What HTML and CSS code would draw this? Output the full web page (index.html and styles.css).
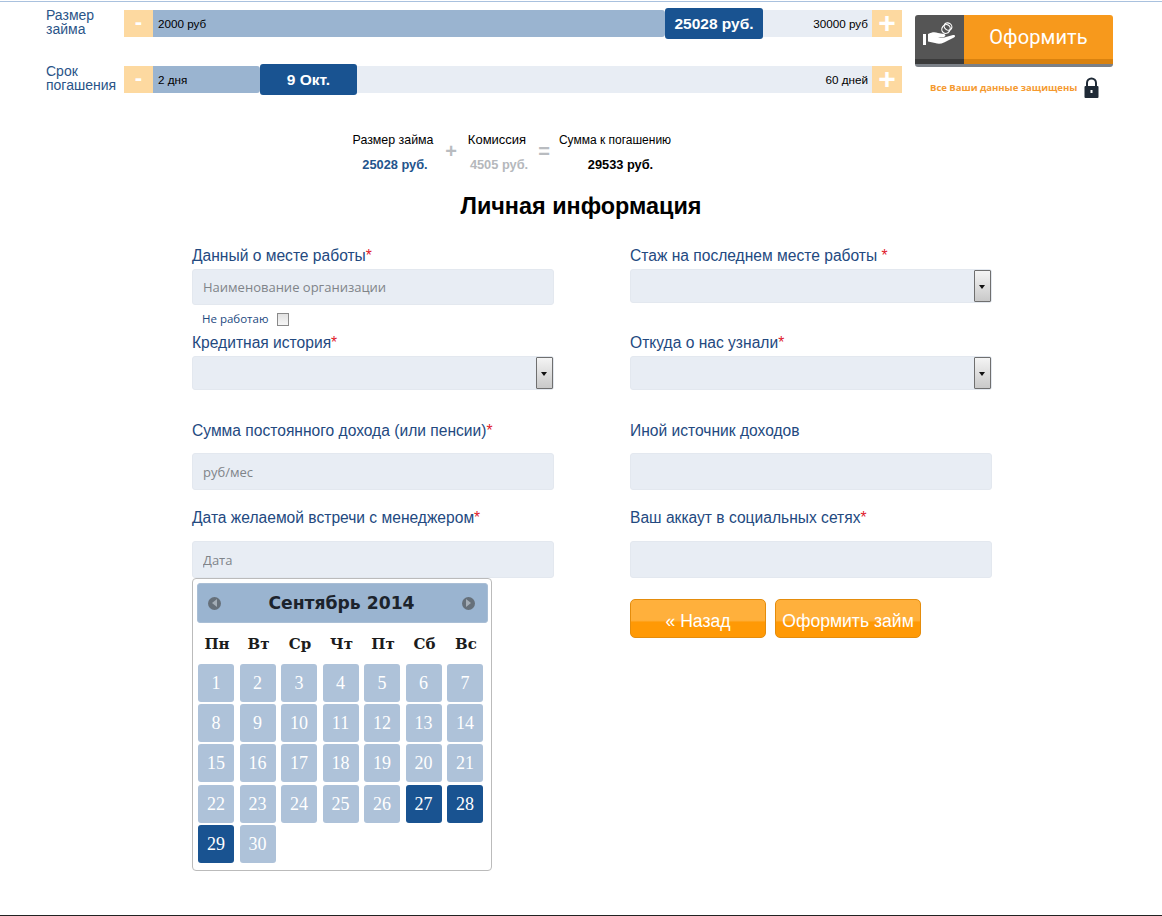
FILE: index.html
```html
<!DOCTYPE html>
<html lang="ru">
<head>
    <meta charset="UTF-8">
    <title>Личная информация</title>
    <link rel="stylesheet" href="styles.css">
</head>
<body>
<div class="page">
    <!-- Calculator -->
    <div class="calc">
        <div class="sliders">
            <div class="slider">
                <div class="slider-label">Размер займа</div>
                <div class="step">-</div>
                <div class="track">
                    <div class="fill fill-sum"><span>2000 руб</span></div>
                    <div class="handle handle-sum">25028 руб.</div>
                    <div class="rest"><span>30000 руб</span></div>
                </div>
                <div class="step step-plus">+</div>
            </div>
            <div class="slider">
                <div class="slider-label">Срок погашения</div>
                <div class="step">-</div>
                <div class="track">
                    <div class="fill fill-term"><span>2 дня</span></div>
                    <div class="handle handle-term">9 Окт.</div>
                    <div class="rest"><span>60 дней</span></div>
                </div>
                <div class="step step-plus">+</div>
            </div>
        </div>
        <div class="order">
            <a class="order-btn" href="#">
                <span class="order-icon">
                    <svg width="36" height="26" viewBox="0 0 36 26">
                        <rect x="1" y="12" width="3" height="11" fill="#fff"/>
                        <path d="M6 12c4-2 7-2 10-1l6 1c2 .4 2 3-1 3h-5c3 .8 6 .8 8 0l7-2c2-.5 3 1 1 2.500l-10 5c-3 1.500-6 1.500-9 .5l-7-1.500z" fill="#fff"/>
                        <ellipse cx="24" cy="7" rx="4" ry="4.500" fill="none" stroke="#fff" stroke-width="1.200" transform="rotate(35 24 7)"/>
                        <ellipse cx="26" cy="4.500" rx="4" ry="3.500" fill="none" stroke="#fff" stroke-width="1.200" transform="rotate(35 26 4.500)"/>
                    </svg>
                </span>
                <span class="order-text">Оформить</span>
            </a>
            <div class="secure">
                <span>Все Ваши данные защищены</span>
                <svg width="15" height="21" viewBox="0 0 15 21">
                    <path d="M3 9V6a4.500 4.500 0 0 1 9 0v3" fill="none" stroke="#1f2a36" stroke-width="2"/>
                    <rect x="0.500" y="9" width="14" height="12" rx="1" fill="#1f2a36"/>
                    <rect x="6.500" y="13" width="2" height="3" fill="#fff"/>
                </svg>
            </div>
        </div>
    </div>

    <!-- Summary -->
    <div class="summary">
        <div class="sum-col sum-loan">
            <div class="sum-title">Размер займа</div>
            <div class="sum-value blue">25028 руб.</div>
        </div>
        <div class="sum-sign sign-plus">+</div>
        <div class="sum-col sum-fee">
            <div class="sum-title">Комиссия</div>
            <div class="sum-value grey">4505 руб.</div>
        </div>
        <div class="sum-sign sign-eq">=</div>
        <div class="sum-col sum-total">
            <div class="sum-title">Сумма к погашению</div>
            <div class="sum-value">29533 руб.</div>
        </div>
    </div>

    <h1>Личная информация</h1>

    <!-- Form -->
    <form class="form">
        <div class="field field-first">
            <label>Данный о месте работы<i>*</i></label>
            <input class="input" type="text" placeholder="Наименование организации">
            <div class="no-work">
                <span>Не работаю</span>
                <input type="checkbox">
            </div>
        </div>
        <div class="field field-first">
            <label>Стаж на последнем месте работы <i>*</i></label>
            <div class="select"><select></select><span class="arrow"></span></div>
        </div>
        <div class="field field-mid">
            <label>Кредитная история<i>*</i></label>
            <div class="select"><select></select><span class="arrow"></span></div>
        </div>
        <div class="field field-mid">
            <label>Откуда о нас узнали<i>*</i></label>
            <div class="select"><select></select><span class="arrow"></span></div>
        </div>
        <div class="field field-low field-income">
            <label>Сумма постоянного дохода (или пенсии)<i>*</i></label>
            <input class="input" type="text" placeholder="руб/мес">
        </div>
        <div class="field field-low field-income">
            <label>Иной источник доходов</label>
            <input class="input" type="text">
        </div>
        <div class="field field-low">
            <label>Дата желаемой встречи с менеджером<i>*</i></label>
            <input class="input" type="text" placeholder="Дата">

            <div class="calendar">
                <div class="cal-head">
                    <span class="cal-nav"><span class="tri-left"></span></span>
                    <span class="cal-title">Сентябрь 2014</span>
                    <span class="cal-nav"><span class="tri-right"></span></span>
                </div>
                <div class="cal-grid">
                    <b>Пн</b><b>Вт</b><b>Ср</b><b>Чт</b><b>Пт</b><b>Сб</b><b>Вс</b>
                    <span>1</span><span>2</span><span>3</span><span>4</span><span>5</span><span>6</span><span>7</span>
                    <span>8</span><span>9</span><span>10</span><span>11</span><span>12</span><span>13</span><span>14</span>
                    <span>15</span><span>16</span><span>17</span><span>18</span><span>19</span><span>20</span><span>21</span>
                    <span>22</span><span>23</span><span>24</span><span>25</span><span>26</span><span class="on">27</span><span class="on">28</span>
                    <span class="on">29</span><span>30</span>
                </div>
            </div>
        </div>
        <div class="field field-low">
            <label>Ваш аккаут в социальных сетях<i>*</i></label>
            <input class="input" type="text">
            <div class="buttons">
                <a class="btn btn-back" href="#">« Назад</a>
                <a class="btn btn-send" href="#">Оформить займ</a>
            </div>
        </div>
    </form>
</div>
</body>
</html>
```

FILE: styles.css
```css
* {
    margin: 0;
    padding: 0;
    box-sizing: border-box;
}

body {
    padding-top: 1px;
    font-family: "Liberation Sans", Arial, sans-serif;
    background: #fff;
    color: #000;
}

.page {
    min-height: calc(100vh - 1px);
    border-top: 1px solid #a9c1de;
    border-bottom: 1px solid #222;
}

/* Calculator */
.calc {
    display: flex;
    padding: 8px 0 0 46px;
}

.sliders {
    width: 856px;
}

.slider {
    display: flex;
    height: 27px;
    margin-bottom: 29px;
}

.slider-label {
    width: 78px;
    margin-top: -2px;
    font-size: 14px;
    line-height: 14px;
    color: #2a5488;
}

.step {
    width: 29px;
    background: #fdd9a0;
    color: #fff;
    font-size: 22px;
    font-weight: bold;
    line-height: 23px;
    text-align: center;
}

.step-plus {
    width: 30px;
    font-size: 30px;
    line-height: 26px;
}

.track {
    display: flex;
    flex: 1;
    font-size: 11.7px;
    line-height: 27px;
}

.fill {
    background: #9ab4d0;
    padding-left: 5px;
    border-radius: 0 3px 3px 0;
}

.fill-sum {
    width: 512px;
}

.fill-term {
    width: 107px;
}

.handle {
    width: 98px;
    height: 31px;
    margin-top: -2px;
    background: #195391;
    border-radius: 3px;
    color: #fff;
    font-size: 15.5px;
    font-weight: bold;
    line-height: 31px;
    text-align: center;
}

.handle-term {
    width: 97px;
}

.rest {
    flex: 1;
    background: #e8edf4;
    padding-right: 4px;
    text-align: right;
}

.order {
    margin: 5px 0 0 13px;
    width: 198px;
}

.order-btn {
    display: flex;
    height: 52px;
    border-radius: 3px;
    overflow: hidden;
    text-decoration: none;
    border-bottom: 3px solid #7b8087;
}

.order-icon {
    display: flex;
    align-items: flex-start;
    justify-content: center;
    width: 49px;
    padding-top: 7px;
    background: #555;
    border-bottom: 5px solid #3b3b3b;
}

.order-text {
    flex: 1;
    background: #f7991c;
    border-bottom: 5px solid #d9820f;
    color: #fff;
    font-family: Roboto, sans-serif;
    font-size: 20px;
    letter-spacing: 0.1px;
    line-height: 45px;
    text-align: center;
}

.secure {
    display: flex;
    align-items: center;
    gap: 7px;
    margin: 10px 0 0 15px;
    color: #f59a30;
    font-family: "Open Sans", sans-serif;
    font-size: 9.5px;
    font-weight: bold;
    white-space: nowrap;
}

/* Summary */
.summary {
    display: flex;
    margin: 10px 0 0 346px;
    height: 50px;
    font-size: 12.4px;
}

.sum-col {
    text-align: center;
}

.sum-title {
    line-height: 16px;
}

.sum-value {
    margin-top: 9px;
    font-size: 12.8px;
    font-weight: bold;
    line-height: 15px;
}

.blue {
    color: #23548c;
}

.grey {
    color: #b5b8bc;
}

.sum-loan {
    width: 94px;
}

.sum-loan .sum-value {
    padding-left: 4px;
}

.sum-fee {
    width: 70px;
}

.sum-fee .sum-title {
    font-size: 13px;
}

.sum-fee .sum-value {
    padding-left: 4px;
}

.sum-total {
    width: 118px;
}

.sum-total .sum-title {
    font-size: 12px;
}

.sum-total .sum-value {
    padding-left: 11px;
}

.sum-sign {
    padding-top: 7px;
    color: #b9bcc0;
    font-size: 20px;
    font-weight: bold;
    line-height: 24px;
    text-align: center;
}

.sign-plus {
    width: 22px;
}

.sign-eq {
    width: 24px;
}

h1 {
    margin-top: 10px;
    font-size: 23.4px;
    line-height: 28px;
    text-align: center;
}

/* Form */
.form {
    display: grid;
    grid-template-columns: 362px 362px;
    column-gap: 76px;
    grid-auto-rows: min-content;
    margin: 27px 0 0 192px;
}

.field {
    position: relative;
    height: 87px;
}

.field-mid {
    height: 88px;
}

.field label {
    display: block;
    height: 22px;
    color: #23497f;
    font-size: 15.6px;
    line-height: 18px;
}

.field-low label {
    height: 32px;
}

.field-income label {
    height: 31px;
}

.field label i {
    color: #e0202c;
    font-style: normal;
}

.input {
    display: block;
    width: 100%;
    height: 36px;
    padding: 0 10px;
    border: 1px solid #e3e8ef;
    border-radius: 3px;
    background: #e8edf4;
    font-family: "Open Sans", sans-serif;
    font-size: 13px;
    outline: none;
}

.field-low .input {
    height: 37px;
}

.input::placeholder {
    color: #7f8489;
}

.no-work {
    display: flex;
    align-items: center;
    gap: 9px;
    margin: 7px 0 0 10px;
    color: #23497f;
    font-family: "Open Sans", sans-serif;
    font-size: 11.5px;
    line-height: 14px;
}

.no-work input {
    width: 12px;
    height: 13px;
    appearance: none;
    border: 1px solid #8a8a8a;
    background: linear-gradient(#e2e2e2, #f6f6f6);
}

.select {
    position: relative;
    height: 34px;
}

.select select {
    display: block;
    width: 100%;
    height: 100%;
    border: 1px solid #e3e8ef;
    border-radius: 3px;
    background: #e8edf4;
    appearance: none;
}

.arrow {
    position: absolute;
    top: 1px;
    right: 1px;
    width: 17px;
    height: 32px;
    border: 1px solid #6f6f6f;
    border-radius: 1px;
    background: linear-gradient(#f4f4f4, #c9c9c9);
}

.arrow::after {
    content: "";
    position: absolute;
    top: 14px;
    left: 4px;
    border-top: 4px solid #111;
    border-left: 3.5px solid transparent;
    border-right: 3.5px solid transparent;
}

/* Calendar popup */
.calendar {
    position: absolute;
    top: 69px;
    left: 0;
    width: 300px;
    height: 293px;
    padding: 4px 3px 0 4px;
    border: 1px solid #bbb;
    border-radius: 4px;
    background: #fff;
    z-index: 2;
}

.cal-head {
    display: flex;
    align-items: center;
    justify-content: space-between;
    height: 40px;
    padding: 0 12px 0 10px;
    border-radius: 3px;
    background: #9ab4d0;
    border: 1px solid #a9bed5;
}

.cal-title {
    color: #1c232c;
    font-family: "DejaVu Sans", sans-serif;
    font-size: 17.2px;
    font-weight: bold;
}

.cal-nav {
    display: flex;
    align-items: center;
    justify-content: center;
    width: 13px;
    height: 13px;
    border-radius: 50%;
    background: #66707a;
}

.tri-left {
    border-right: 5px solid #a4adb6;
    border-top: 4px solid transparent;
    border-bottom: 4px solid transparent;
}

.tri-right {
    border-left: 5px solid #a4adb6;
    border-top: 4px solid transparent;
    border-bottom: 4px solid transparent;
}

.cal-grid {
    display: grid;
    grid-template-columns: repeat(7, 36px);
    grid-auto-rows: 38px;
    column-gap: 5.5px;
    row-gap: 2.15px;
    margin: 1px 0 0 1px;
}

.cal-grid b {
    padding-left: 2px;
    color: #1c1c1c;
    font-family: "DejaVu Serif", serif;
    font-size: 15px;
    line-height: 41px;
    text-align: center;
}

.cal-grid span {
    border-radius: 3px;
    background: #aec2d9;
    color: #fff;
    font-family: "Liberation Serif", serif;
    font-size: 18px;
    line-height: 38px;
    text-align: center;
}

.cal-grid span.on {
    background: #195391;
}

/* Buttons */
.buttons {
    display: flex;
    gap: 9px;
    margin-top: 21px;
}

.btn {
    height: 39px;
    border: 1px solid #e48c0c;
    border-radius: 5px;
    background: linear-gradient(#ffb03c 55%, #ff9905 60%);
    color: #fff;
    font-size: 17.6px;
    line-height: 42px;
    text-align: center;
    text-decoration: none;
}

.btn-back {
    width: 136px;
}

.btn-send {
    width: 146px;
}
```
